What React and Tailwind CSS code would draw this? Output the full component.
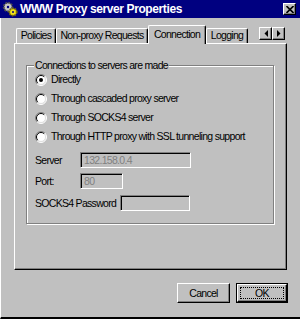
import React from "react";

const Radio = ({ checked }) => (
  <svg width="12" height="12" viewBox="0 0 12 12" className="shrink-0">
    <circle cx="6" cy="6" r="5" fill="#ffffff" />
    <path d="M2.1 9.9 A5.5 5.5 0 0 1 9.9 2.1" fill="none" stroke="#808080" strokeWidth="1" />
    <path d="M9.9 2.1 A5.5 5.5 0 0 1 2.1 9.9" fill="none" stroke="#ffffff" strokeWidth="1" />
    <path d="M2.8 9.2 A4.5 4.5 0 0 1 9.2 2.8" fill="none" stroke="#000000" strokeWidth="1" />
    <path d="M9.2 2.8 A4.5 4.5 0 0 1 2.8 9.2" fill="none" stroke="#dfdfdf" strokeWidth="1" />
    {checked && <circle cx="6" cy="6" r="2" fill="#000000" />}
  </svg>
);

const Gears = () => (
  <svg width="16" height="16" viewBox="0 0 16 16" className="shrink-0">
    <circle cx="6" cy="6" r="4.2" fill="#a0a0a0" stroke="#505050" strokeWidth="2" strokeDasharray="1.6 1.2" />
    <circle cx="6" cy="6" r="3.2" fill="#c8c8c8" />
    <circle cx="6" cy="6" r="1.2" fill="#000080" />
    <circle cx="11" cy="11" r="3.6" fill="#e0d000" stroke="#807000" strokeWidth="2" strokeDasharray="1.5 1.1" />
    <circle cx="11" cy="11" r="2.6" fill="#f0e020" />
    <circle cx="11" cy="11" r="1" fill="#000080" />
  </svg>
);

const Tab = ({ label, width, selected }) =>
  selected ? (
    <div
      className={`${width} h-[19px] -mb-[1px] bg-[#c0c0c0] border-l border-t border-white border-r border-r-black rounded-t-[2px] shadow-[inset_-1px_0_0_#808080] flex items-start justify-center pt-[2px] relative z-10 whitespace-nowrap`}
    >
      {label}
    </div>
  ) : (
    <div
      className={`${width} h-[15px] border-l border-t border-white border-r border-r-black rounded-t-[2px] shadow-[inset_-1px_0_0_#808080] flex items-start justify-center whitespace-nowrap`}
    >
      {label}
    </div>
  );

const ArrowBtn = ({ dir }) => (
  <div className="w-[13px] h-[13px] border-t border-l border-white border-r border-b border-r-black border-b-black shadow-[inset_-1px_-1px_0_#808080] flex items-center justify-center">
    <svg width="4" height="7" viewBox="0 0 4 7">
      {dir === "left" ? (
        <path d="M4 0 L4 7 L0.5 3.5 Z" fill="#000" />
      ) : (
        <path d="M0 0 L0 7 L3.5 3.5 Z" fill="#000" />
      )}
    </svg>
  </div>
);

const Field = ({ width, value }) => (
  <div
    className={`${width} h-[16px] shrink-0 border-t border-l border-[#808080] border-r border-b border-r-white border-b-white shadow-[inset_1px_1px_0_#000000] flex items-center pl-[3px] text-[#808080]`}
  >
    {value}
  </div>
);

export default function App() {
  return (
    <div className="w-[300px] h-[319px] bg-[#c0c0c0] flex flex-col font-['Liberation_Sans',Arial,sans-serif] text-[10.5px] tracking-[-0.7px] text-black leading-[13px]">
      <div className="h-[18px] bg-[#000080] flex items-center pl-[2px] pr-[4px] shrink-0">
        <Gears />
        <span className="ml-[2px] text-white font-bold text-[12px] tracking-[-0.4px]">
          WWW Proxy server Properties
        </span>
        <div className="ml-auto w-[13px] h-[12px] bg-[#c0c0c0] border-t border-l border-white border-r border-b border-r-black border-b-black shadow-[inset_-1px_-1px_0_#808080] flex items-center justify-center">
          <svg width="8" height="7" viewBox="0 0 8 7">
            <path d="M0.5 0 L7.5 7 M7.5 0 L0.5 7" stroke="#000" strokeWidth="1.6" />
          </svg>
        </div>
      </div>

      <div className="flex-1 flex flex-col border-l border-white border-b-2 border-b-black pl-[13px] pr-[13px] pt-[8px]">
        <div className="flex items-end h-[17px] pl-[2px]">
          <Tab label="Policies" width="w-[40px]" />
          <Tab label="Non-proxy Requests" width="w-[92px]" />
          <Tab label="Connection" width="w-[58px]" selected />
          <Tab label="Logging" width="w-[42px]" />
          <div className="ml-auto mr-[2px] mb-[3px] flex">
            <ArrowBtn dir="left" />
            <ArrowBtn dir="right" />
          </div>
        </div>

        <div className="h-[227px] border-t border-l border-white border-r border-b border-r-black border-b-black shadow-[inset_-1px_-1px_0_#808080] pt-[15px]">
          <fieldset className="ml-[11px] w-[248px] border border-[#808080] shadow-[1px_1px_0_#ffffff,inset_1px_1px_0_#ffffff] pl-[8px] pb-[12px]">
            <legend className="px-[1px] -ml-[1px] bg-[#c0c0c0] leading-[13px]">
              Connections to servers are made
            </legend>
            <div className="-mt-[2px] flex flex-col">
              <label className="h-[19px] flex items-center gap-[4px]">
                <Radio checked />
                <span>Directly</span>
              </label>
              <label className="h-[19px] flex items-center gap-[4px]">
                <Radio />
                <span>Through cascaded proxy server</span>
              </label>
              <label className="h-[19px] flex items-center gap-[4px]">
                <Radio />
                <span>Through SOCKS4 server</span>
              </label>
              <label className="h-[19px] flex items-center gap-[4px]">
                <Radio />
                <span>Through HTTP proxy with SSL tunneling support</span>
              </label>
              <div className="mt-[6px] flex items-center">
                <span className="w-[45px]">Server</span>
                <Field width="w-[111px]" value="132.158.0.4" />
              </div>
              <div className="mt-[5px] flex items-center">
                <span className="w-[45px]">Port:</span>
                <Field width="w-[43px]" value="80" />
              </div>
              <div className="mt-[6px] flex items-center">
                <span className="w-[85px] whitespace-nowrap">SOCKS4 Password</span>
                <Field width="w-[70px]" value="" />
              </div>
            </div>
          </fieldset>
        </div>

        <div className="mt-[13px] flex justify-end gap-[6px] -mr-[1px]">
          <button className="w-[53px] h-[20px] border-t border-l border-white border-r border-b border-r-black border-b-black shadow-[inset_-1px_-1px_0_#808080] flex items-center justify-center">
            Cancel
          </button>
          <button className="w-[52px] h-[20px] border border-black flex">
            <div className="flex-1 border-t border-l border-white border-r border-b border-r-black border-b-black shadow-[inset_-1px_-1px_0_#808080] p-[2px] flex">
              <div className="flex-1 border border-dotted border-black flex items-center justify-center">
                OK
              </div>
            </div>
          </button>
        </div>
      </div>
    </div>
  );
}
